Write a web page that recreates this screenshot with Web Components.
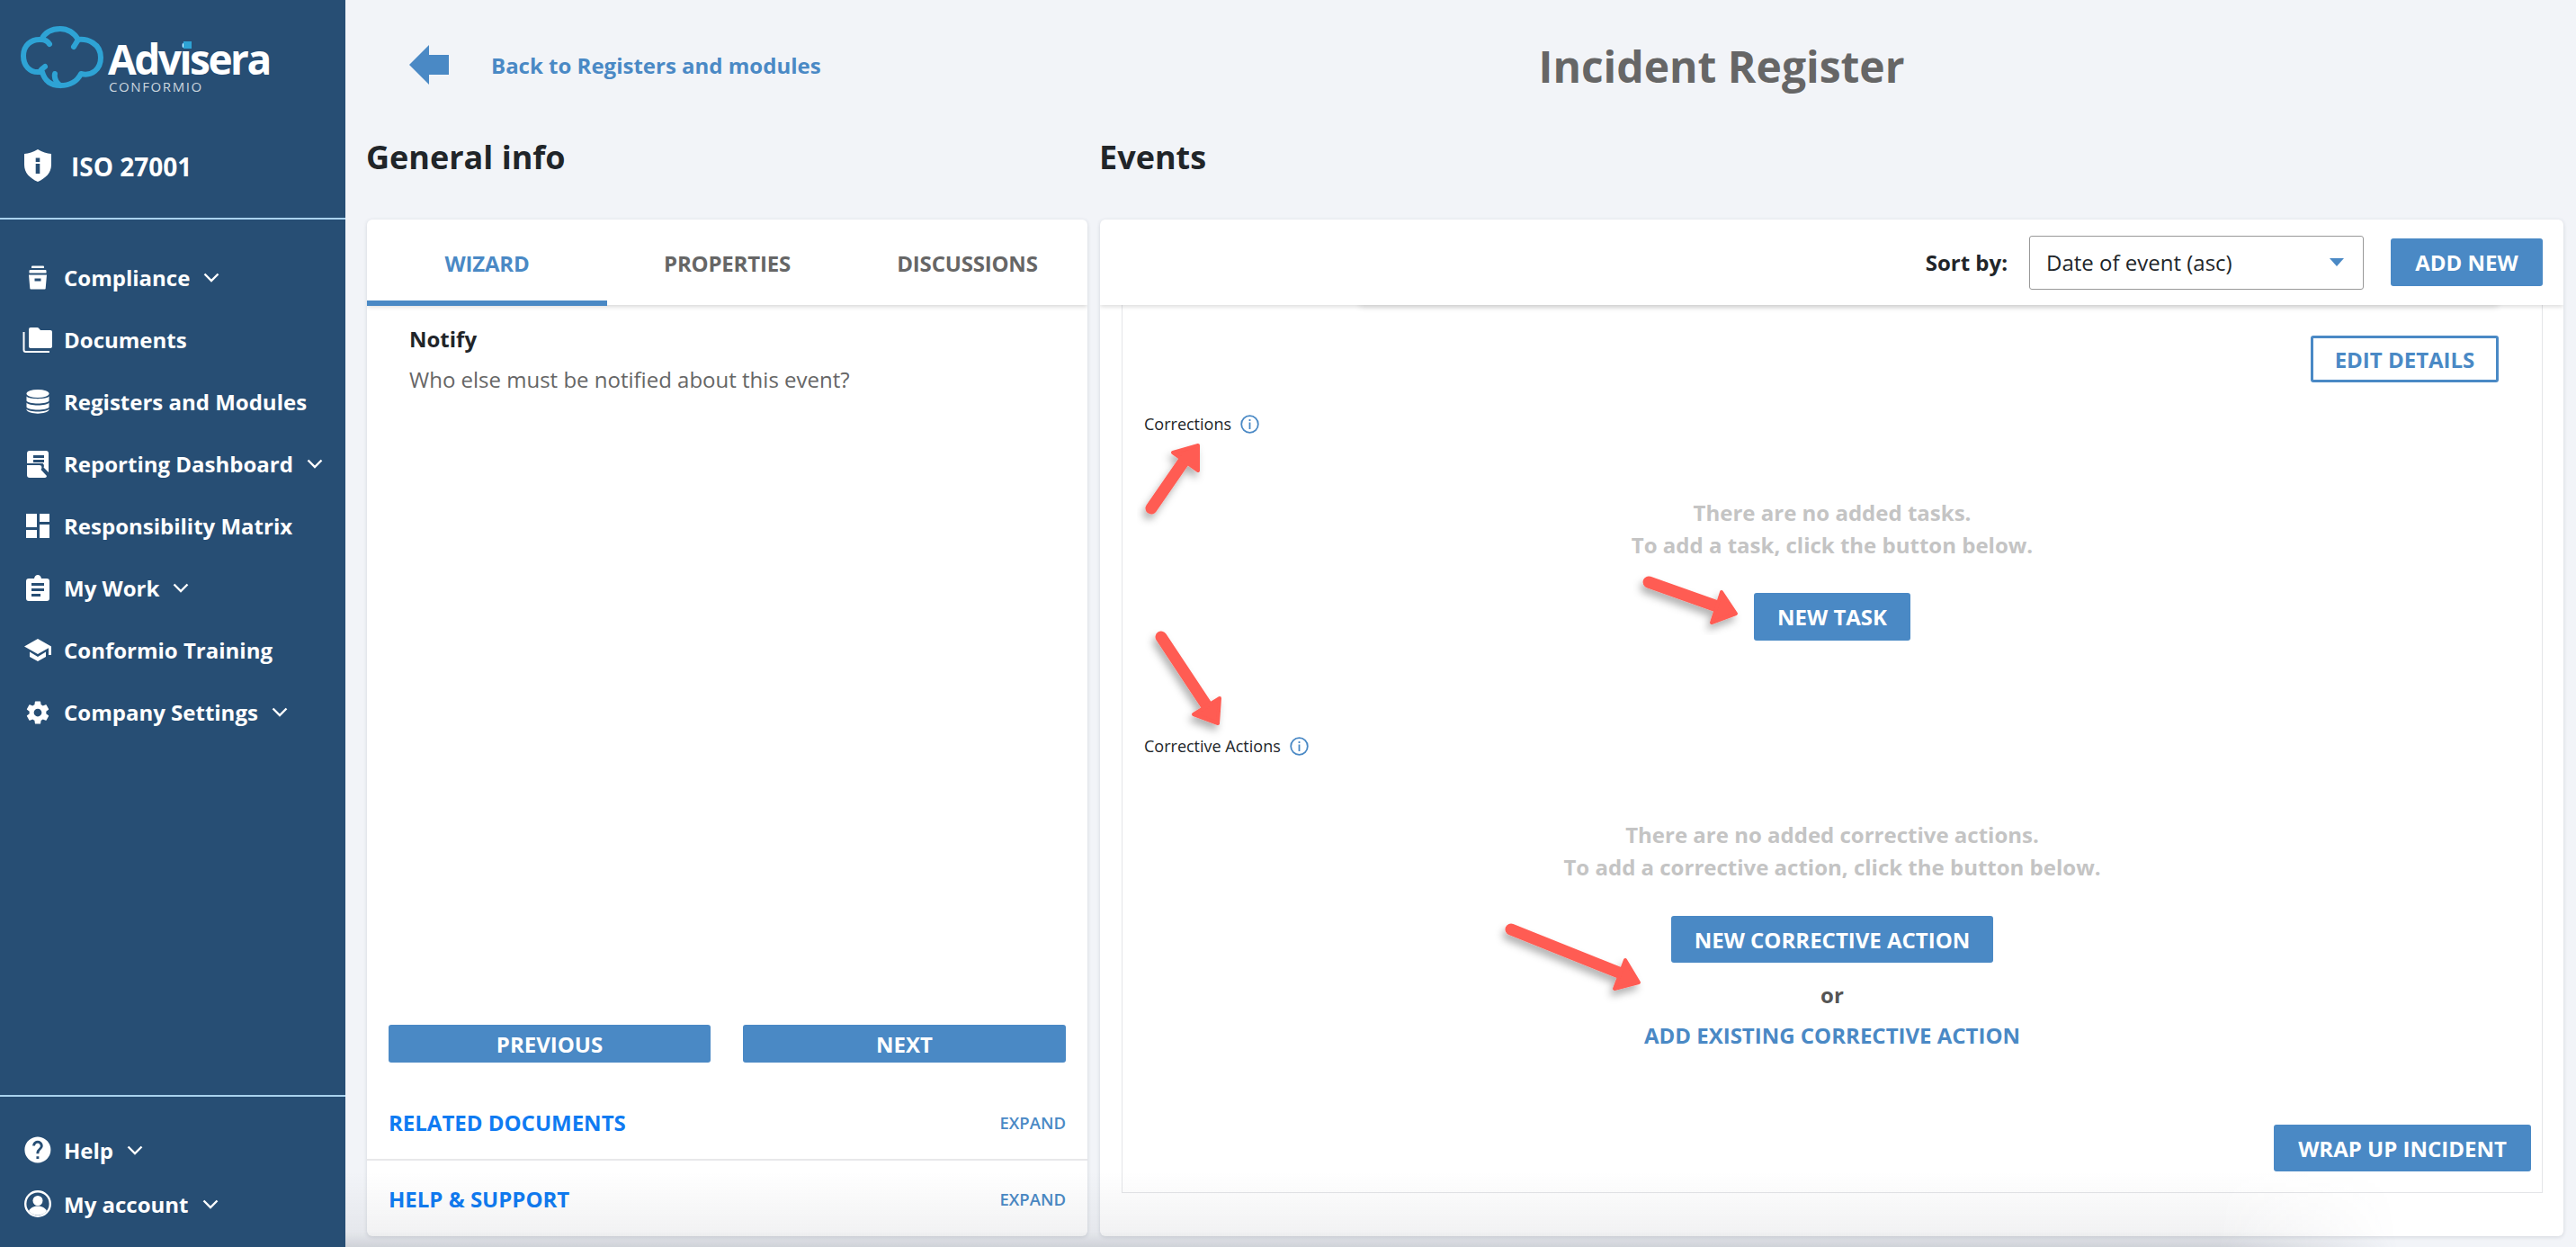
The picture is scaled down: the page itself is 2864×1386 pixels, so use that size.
<!DOCTYPE html>
<html lang="en">
<head>
<meta charset="utf-8">
<title>Incident Register</title>
<style>
  html, body { margin: 0; height: 100%; }
  body { font-family: "Open Sans", "Liberation Sans", sans-serif; background: #f2f4f8; overflow: hidden; }
</style>
</head>
<body>
<app-shell>
  <side-bar slot="side">
    <nav-item icon="archive" chevron>Compliance</nav-item>
    <nav-item icon="folders">Documents</nav-item>
    <nav-item icon="database">Registers and Modules</nav-item>
    <nav-item icon="report" chevron>Reporting Dashboard</nav-item>
    <nav-item icon="matrix">Responsibility Matrix</nav-item>
    <nav-item icon="clipboard" chevron>My Work</nav-item>
    <nav-item icon="school">Conformio Training</nav-item>
    <nav-item icon="gear" chevron>Company Settings</nav-item>
    <nav-item slot="bottom" icon="help" chevron compact>Help</nav-item>
    <nav-item slot="bottom" icon="account" chevron compact>My account</nav-item>
  </side-bar>
  <page-header slot="head" title-text="Incident Register">Back to Registers and modules</page-header>
  <page-column slot="left" heading="General info"><wizard-card></wizard-card></page-column>
  <page-column slot="right" heading="Events"><events-card></events-card></page-column>
  <annotation-arrows slot="over"></annotation-arrows>
</app-shell>

<script>
const ICONS = {
  archive: '<path d="M7 .5h12a1 1 0 0 1 1 1v1.500H6V1.500a1 1 0 0 1 1-1zM4.500 5h17a1 1 0 0 1 1 1v2.500h-19V6a1 1 0 0 1 1-1zM3 10.500h20l-1.300 15a1 1 0 0 1-1 1H5.300a1 1 0 0 1-1-1zM9.500 14.500v3h7v-3z" fill-rule="evenodd"/>',
  folders: '<path d="M9 1h7.500a2 2 0 0 1 1.500.8L20 4h11a2 2 0 0 1 2 2v16a2 2 0 0 1-2 2H9a2 2 0 0 1-2-2V3a2 2 0 0 1 2-2z"/><path d="M1.500 6v20a2 2 0 0 0 2 2H30" fill="none" stroke="currentColor" stroke-width="2"/>',
  database: '<ellipse cx="13" cy="4.500" rx="12.500" ry="4.500"/><path d="M.5 7.500C2.500 11 23.500 11 25.500 7.500v5C23.500 16.500 2.500 16.500.5 12.500zM.5 14.500C2.500 18.500 23.500 18.500 25.500 14.500v5C23.500 23.500 2.500 23.500.5 19.500zM.5 21.500C2.500 25.500 23.500 25.500 25.500 21.500v1C23.500 28 2.500 28 .5 22.500z"/>',
  report: '<path fill-rule="evenodd" d="M3 0h18a3 3 0 0 1 3 3v21l-5.500-5.500c.8-2 .3-3.600-1-4.500H0V3a3 3 0 0 1 3-3zM7 5v3h12V5zM7 10v3h12v-3z"/><path d="M0 16h14c2.500 0 3 3 1.500 5l6.500 7c-.3 1-.8 2-2 2H3a3 3 0 0 1-3-3z"/>',
  matrix: '<path d="M0 0h12v15H0zM0 18h12v9H0zM15 0h11v9H15zM15 12h11v15H15z"/>',
  clipboard: '<path fill-rule="evenodd" d="M9 4C9.500 1.500 11 0 13 0s3.500 1.500 4 4h6a3 3 0 0 1 3 3v19a3 3 0 0 1-3 3H3a3 3 0 0 1-3-3V7a3 3 0 0 1 3-3zM6 9v3h14V9zM6 15v3h14v-3zM6 21v3h10v-3z"/>',
  school: '<path d="M15 0 0 8.500 15 17l12-6.800V18h3V8.500zM6 14.500V20l9 5 9-5v-5.500L15 20z"/>',
  gear: '<g transform="scale(1.250)"><path d="M19.430 12.980c.04-.32.07-.64.07-.98s-.03-.66-.07-.98l2.110-1.650c.19-.15.24-.42.12-.64l-2-3.460c-.12-.22-.39-.3-.61-.22l-2.490 1c-.52-.4-1.080-.73-1.690-.98l-.38-2.650C14.460 2.180 14.250 2 14 2h-4c-.25 0-.46.180-.49.420l-.38 2.650c-.61.250-1.170.59-1.690.98l-2.490-1c-.23-.09-.49 0-.61.220l-2 3.460c-.13.220-.07.490.12.640l2.110 1.650c-.04.320-.07.650-.07.980s.03.660.07.980l-2.110 1.650c-.19.150-.24.420-.12.640l2 3.460c.12.220.39.300.61.220l2.490-1c.52.400 1.080.730 1.690.980l.38 2.650c.03.240.24.420.49.420h4c.25 0 .46-.180.49-.420l.38-2.650c.61-.250 1.170-.590 1.690-.980l2.490 1c.23.090.49 0 .61-.220l2-3.460c.12-.220.07-.490-.12-.640zM12 15.500c-1.930 0-3.500-1.570-3.500-3.500s1.570-3.500 3.500-3.500 3.500 1.570 3.500 3.500-1.570 3.500-3.500 3.500z"/></g>',
  help: '<g transform="translate(-2.500 -2.500) scale(1.450)"><path d="M12 2C6.480 2 2 6.480 2 12s4.480 10 10 10 10-4.480 10-10S17.520 2 12 2zm1 17h-2v-2h2v2zm2.070-7.750l-.9.920C13.450 12.900 13 13.500 13 15h-2v-.5c0-1.100.45-2.100 1.170-2.830l1.240-1.260c.37-.360.590-.860.590-1.410 0-1.100-.9-2-2-2s-2 .9-2 2H8c0-2.210 1.790-4 4-4s4 1.790 4 4c0 .880-.36 1.680-.93 2.250z"/></g>',
  account: '<circle cx="15" cy="15" r="13.800" fill="none" stroke="currentColor" stroke-width="2.400"/><circle cx="15" cy="11.500" r="5.500"/><path d="M5 23c2-4 6-5.500 10-5.500S23 19 25 23c-2.500 3-6 4.500-10 4.500S7.500 26 5 23z"/>'
};
const ICON_BOX = {
  archive: [26, 27], folders: [34, 29], database: [26, 27], report: [24, 30],
  matrix: [26, 27], clipboard: [26, 29], school: [30, 25], gear: [30, 30],
  help: [30, 30], account: [30, 30]
};

class AppShell extends HTMLElement {
  constructor() {
    super();
    this.attachShadow({ mode: 'open' });
    this.shadowRoot.innerHTML = `
      <style>
        :host { display: flex; position: relative; width: 2864px; height: 1386px; overflow: hidden; }
        .main { flex: 1; display: flex; flex-direction: column; min-width: 0; position: relative; }
        .cols { flex: 1; display: grid; grid-template-columns: 801px 1fr; gap: 14px; padding: 0 14px 12px 24px; min-height: 0; }
        .fade {
          position: absolute; left: 0; right: 0; bottom: 0; height: 84px; pointer-events: none;
          background: linear-gradient(to bottom, rgba(70,75,90,0), rgba(70,75,90,.07) 80%, rgba(70,75,90,.2));
          -webkit-mask-image: linear-gradient(to right, #000 84%, transparent 92%);
          mask-image: linear-gradient(to right, #000 84%, transparent 92%);
        }
      </style>
      <slot name="side"></slot>
      <div class="main">
        <slot name="head"></slot>
        <div class="cols"><slot name="left"></slot><slot name="right"></slot></div>
        <div class="fade"></div>
      </div>
      <slot name="over"></slot>
    `;
  }
}

class SideBar extends HTMLElement {
  constructor() {
    super();
    this.attachShadow({ mode: 'open' });
    this.shadowRoot.innerHTML = `
      <style>
        :host { display: flex; flex-direction: column; width: 384px; flex: none; height: 1386px; background: #274e74; color: #fff; box-sizing: border-box; }
        .logo { position: relative; height: 132px; flex: none; }
        .cloud { position: absolute; left: 23px; top: 29px; }
        .name { position: absolute; left: 120px; top: 44px; font-size: 46px; line-height: 42px; font-weight: 700; letter-spacing: -2.500px; white-space: nowrap; }
        .dot { position: absolute; left: 204px; top: 46px; width: 9px; height: 8px; background: #2ea3d5; }
        .sub { position: absolute; left: 121px; top: 89px; font-size: 15px; line-height: 14px; letter-spacing: 1.600px; color: #ccd6df; white-space: nowrap; }
        .iso { height: 112px; flex: none; display: flex; align-items: flex-start; padding-left: 27px; gap: 22px; border-bottom: 2px solid #a9d2ee; box-sizing: border-box; }
        .iso svg { margin-top: 34px; }
        .iso span { font-size: 28px; line-height: 40px; font-weight: 700; margin-top: 33px; }
        .nav { flex: 1; padding-top: 30px; }
        .bottom { flex: none; height: 169px; border-top: 2px solid #a9d2ee; box-sizing: border-box; padding-top: 29px; display: flex; flex-direction: column; }
      </style>
      <div class="logo">
        <svg class="cloud" width="92" height="70" viewBox="0 0 92 70" fill="none" stroke="#2ea3d5" stroke-width="6" stroke-linecap="round" stroke-linejoin="round">
          <path d="M21 51C10 52 3 44 3 33 3 22 11 14 23 15 27 7 35 3 44 3c9 0 15 4 20 12 10-1 25 4 25 20 0 13-10 21-22 18-4 8-12 13-23 13-9 0-17-4-20-15"/>
          <path d="M23 15c3 0 7 2 9 5M64 15c-2 3-3 5-5 8M44 66c-5-4-7-8-6-13M21 51c2-3 3-4 6-6"/>
        </svg>
        <span class="name">Advisera</span><span class="dot"></span>
        <span class="sub">CONFORMIO</span>
      </div>
      <div class="iso">
        <svg width="30" height="36" viewBox="0 0 30 36"><path fill="#fff" fill-rule="evenodd" d="M15 0C20 3 25 4.500 30 5v12c0 9-6 15-15 19C6 32 0 26 0 17V5C5 4.500 10 3 15 0zM12.700 9.500v4.500h4.600V9.500zM12.700 16v11h4.600V16z"/></svg>
        <span>ISO 27001</span>
      </div>
      <div class="nav"><slot></slot></div>
      <div class="bottom"><slot name="bottom"></slot></div>
    `;
  }
}

class NavItem extends HTMLElement {
  constructor() {
    super();
    this.attachShadow({ mode: 'open' });
  }

  connectedCallback() {
    const name = this.getAttribute('icon');
    const [w, h] = ICON_BOX[name];
    this.shadowRoot.innerHTML = `
      <style>
        :host { display: flex; align-items: center; height: 69px; padding-left: 24px; font-size: 24px; font-weight: 700; color: #fff; white-space: nowrap; }
        :host([compact]) { height: 60px; }
        .ico { width: 36px; margin-right: 11px; display: flex; justify-content: center; flex: none; }
        svg.i { fill: currentColor; display: block; }
        .chev { margin-left: 15px; }
      </style>
      <span class="ico"><svg class="i" width="${w}" height="${h}" viewBox="0 0 ${w} ${h}">${ICONS[name]}</svg></span>
      <slot></slot>
      ${this.hasAttribute('chevron') ? '<svg class="chev" width="18" height="11" viewBox="0 0 18 11" fill="none" stroke="#fff" stroke-width="2.400"><path d="M1.500 1.500 9 9l7.500-7.500"/></svg>' : ''}
    `;
  }
}

class PageHeader extends HTMLElement {
  constructor() {
    super();
    this.attachShadow({ mode: 'open' });
  }

  connectedCallback() {
    this.shadowRoot.innerHTML = `
      <style>
        :host { display: flex; align-items: center; height: 146px; flex: none; }
        .back { width: 580px; flex: none; display: flex; align-items: center; margin-top: -2px; padding-left: 71px; box-sizing: border-box; gap: 47px; font-size: 24px; font-weight: 700; color: #4a89c5; white-space: nowrap; }
        h1 { flex: 1; margin: 0; text-align: center; font-size: 48px; font-weight: 700; color: #666; }
      </style>
      <div class="back">
        <svg width="44" height="44" viewBox="0 0 44 44" style="flex:none"><path fill="#4a89c5" d="M22 0v11h22v22H22v11L0 22z"/></svg>
        <span><slot></slot></span>
      </div>
      <h1>${this.getAttribute('title-text')}</h1>
    `;
  }
}

class PageColumn extends HTMLElement {
  constructor() {
    super();
    this.attachShadow({ mode: 'open' });
  }

  connectedCallback() {
    this.shadowRoot.innerHTML = `
      <style>
        :host { display: flex; flex-direction: column; min-height: 0; height: 100%; }
        h2 { margin: 0 0 0 -1px; height: 98px; flex: none; font-size: 36px; line-height: 58px; font-weight: 700; color: #212529; }
        ::slotted(*) { flex: 1; min-height: 0; }
      </style>
      <h2>${this.getAttribute('heading')}</h2>
      <slot></slot>
    `;
  }
}

class AppButton extends HTMLElement {
  constructor() {
    super();
    this.attachShadow({ mode: 'open' });
    this.shadowRoot.innerHTML = `
      <style>
        :host { display: inline-flex; align-items: center; justify-content: center; height: 53px; box-sizing: border-box; padding: 0 26px; background: #4a89c5; color: #fff; border-radius: 3px; font-size: 24px; font-weight: 700; white-space: nowrap; }
        :host([outline]) { background: #fff; color: #4a89c5; border: 3px solid #4a89c5; }
      </style>
      <slot></slot>
    `;
  }
}

class WizardCard extends HTMLElement {
  constructor() {
    super();
    this.attachShadow({ mode: 'open' });
    this.shadowRoot.innerHTML = `
      <style>
        :host { display: flex; flex-direction: column; background: #fff; border-radius: 6px; box-shadow: 0 1px 4px rgba(40,50,70,.16); overflow: hidden; }
        .tabs { display: grid; grid-template-columns: repeat(3, 1fr); height: 95px; flex: none; box-shadow: 0 2px 5px rgba(0,0,0,.16); position: relative; font-size: 24px; font-weight: 700; color: #666; letter-spacing: -.2px; }
        .tabs div { display: flex; align-items: center; justify-content: center; }
        .tabs .on { color: #4a89c5; border-bottom: 6px solid #4a89c5; height: 96px; box-sizing: border-box; padding-top: 6px; }
        .body { flex: 1; padding: 22px 47px 0; font-size: 24px; line-height: 32px; }
        .body b { display: block; font-weight: 700; color: #212529; }
        .body p { margin: 13px 0 0; color: #666; }
        .btns { display: grid; grid-template-columns: 358px 359px; gap: 36px; padding: 0 24px; flex: none; }
        .btns app-button { height: 42px; padding: 0; }
        .row { display: flex; align-items: center; justify-content: space-between; height: 82px; padding: 0 24px; flex: none; color: #0f7bf2; font-size: 24px; font-weight: 700; }
        .row small { font-size: 18.500px; font-weight: 600; color: #4a89c5; }
        .row.first { margin-top: 25px; border-bottom: 2px solid #e8e8ea; }
        .row.last { height: 84px; }
      </style>
      <div class="tabs"><div class="on">WIZARD</div><div>PROPERTIES</div><div>DISCUSSIONS</div></div>
      <div class="body"><b>Notify</b><p>Who else must be notified about this event?</p></div>
      <div class="btns"><app-button>PREVIOUS</app-button><app-button>NEXT</app-button></div>
      <div class="row first"><span>RELATED DOCUMENTS</span><small>EXPAND</small></div>
      <div class="row last"><span>HELP &amp; SUPPORT</span><small>EXPAND</small></div>
    `;
  }
}

class EmptyBlock extends HTMLElement {
  constructor() {
    super();
    this.attachShadow({ mode: 'open' });
  }

  connectedCallback() {
    this.shadowRoot.innerHTML = `
      <style>
        :host { display: block; }
        .label { display: flex; align-items: center; gap: 10px; height: 24px; padding-left: 24px; font-size: 18px; color: #212529; }
        .msg { margin-top: 69px; text-align: center; font-size: 24px; line-height: 36px; font-weight: 700; color: #c4c4c4; }
        .actions { display: flex; flex-direction: column; align-items: center; }
      </style>
      <div class="label">
        <span>${this.getAttribute('label')}</span>
        <svg width="21" height="21" viewBox="0 0 21 21"><circle cx="10.500" cy="10.500" r="9.300" fill="none" stroke="#4a89c5" stroke-width="1.800"/><path fill="#4a89c5" d="M9.600 5h1.800v2H9.600zM9.600 8.500h1.800v7.500H9.600z"/></svg>
      </div>
      <div class="msg">${this.getAttribute('line1')}<br>${this.getAttribute('line2')}</div>
      <div class="actions"><slot></slot></div>
    `;
  }
}

class EventsCard extends HTMLElement {
  constructor() {
    super();
    this.attachShadow({ mode: 'open' });
    this.shadowRoot.innerHTML = `
      <style>
        :host { display: flex; flex-direction: column; background: #fff; border-radius: 6px; box-shadow: 0 1px 4px rgba(40,50,70,.16); overflow: hidden; }
        .bar { height: 95px; flex: none; display: flex; align-items: center; justify-content: flex-end; padding-right: 23px; box-sizing: border-box; background: #fff; position: relative; z-index: 1; box-shadow: 0 2px 5px rgba(0,0,0,.14); border-radius: 6px 6px 0 0; }
        .bar b { font-size: 24px; font-weight: 700; color: #212529; margin-right: 24px; }
        .select { width: 372px; height: 60px; box-sizing: border-box; border: 1px solid #999; border-radius: 3px; display: flex; align-items: center; justify-content: space-between; padding: 0 21px 0 18px; font-size: 24px; color: #212529; margin-right: 30px; }
        .tri { width: 0; height: 0; border: 8px solid transparent; border-top: 9px solid #4a89c5; border-bottom: 0; }
        .bar app-button { width: 169px; padding: 0; }
        .peek { position: absolute; left: 288px; width: 1267px; top: -6px; height: 6px; box-shadow: 0 3px 6px rgba(0,0,0,.1); border-radius: 0 0 4px 4px; }
        .wrap { position: relative; flex: 1; min-height: 0; padding: 0 23px 48px 24px; display: flex; }
        .box { flex: 1; display: flex; flex-direction: column; border: 1px solid #e4e5e8; border-top: 0; padding-top: 34px; box-sizing: border-box; font-size: 24px; }
        .edit { align-self: flex-end; margin-right: 48px; height: 52px; width: 209px; padding: 0; }
        .first { margin-top: 34px; }
        .second { margin-top: 105px; }
        .new-task { margin-top: 35px; }
        .new-action { margin-top: 36px; height: 52px; }
        .or { margin-top: 20px; font-weight: 700; color: #555; line-height: 32px; }
        .existing { margin-top: 13px; font-weight: 700; color: #4a89c5; line-height: 32px; }
        .wrap-up { align-self: flex-end; margin: auto 12px 23px 0; height: 52px; width: 286px; padding: 0; }
      </style>
      <div class="bar">
        <b>Sort by:</b>
        <div class="select"><span>Date of event (asc)</span><i class="tri"></i></div>
        <app-button>ADD NEW</app-button>
      </div>
      <div class="wrap">
        <div class="peek"></div>
        <div class="box">
          <app-button class="edit" outline>EDIT DETAILS</app-button>
          <empty-block class="first" label="Corrections" line1="There are no added tasks." line2="To add a task, click the button below.">
            <app-button class="new-task">NEW TASK</app-button>
          </empty-block>
          <empty-block class="second" label="Corrective Actions" line1="There are no added corrective actions." line2="To add a corrective action, click the button below.">
            <app-button class="new-action">NEW CORRECTIVE ACTION</app-button>
            <div class="or">or</div>
            <div class="existing">ADD EXISTING CORRECTIVE ACTION</div>
          </empty-block>
          <app-button class="wrap-up">WRAP UP INCIDENT</app-button>
        </div>
      </div>
    `;
  }
}

// the red arrows were drawn on top of the screenshot, so they sit on a free canvas
class AnnotationArrows extends HTMLElement {
  constructor() {
    super();
    this.attachShadow({ mode: 'open' });
    const arrows = [
      { tail: [1280, 565], neck: [1318, 510], head: '1332,495 1304,503 1332,523' },
      { tail: [1833, 647], neck: [1912, 675], head: '1930,682 1914,658 1903,692' },
      { tail: [1291, 708], neck: [1344, 788], head: '1354,804 1356,776 1327,794' },
      { tail: [1680, 1033], neck: [1805, 1083], head: '1822,1092 1807,1067 1795,1099' }
    ];
    const marks = arrows.map(a => `
      <g filter="url(#drop)">
        <path d="M${a.tail} L${a.neck}" stroke="#ff5b52" stroke-width="13" stroke-linecap="round" fill="none"/>
        <polygon points="${a.head}" fill="#ff5b52" stroke="#ff5b52" stroke-width="4" stroke-linejoin="round"/>
      </g>`).join('');
    this.shadowRoot.innerHTML = `
      <style>
        :host { position: absolute; left: 0; top: 0; display: block; pointer-events: none; }
      </style>
      <svg width="2864" height="1386" viewBox="0 0 2864 1386">
        <defs>
          <filter id="drop" x="-30%" y="-30%" width="160%" height="160%">
            <feDropShadow dx="-3" dy="6" stdDeviation="4" flood-color="#000" flood-opacity=".3"/>
          </filter>
        </defs>
        ${marks}
      </svg>
    `;
  }
}

customElements.define('nav-item', NavItem);
customElements.define('side-bar', SideBar);
customElements.define('app-button', AppButton);
customElements.define('empty-block', EmptyBlock);
customElements.define('page-header', PageHeader);
customElements.define('page-column', PageColumn);
customElements.define('wizard-card', WizardCard);
customElements.define('events-card', EventsCard);
customElements.define('annotation-arrows', AnnotationArrows);
customElements.define('app-shell', AppShell);
</script>
</body>
</html>
